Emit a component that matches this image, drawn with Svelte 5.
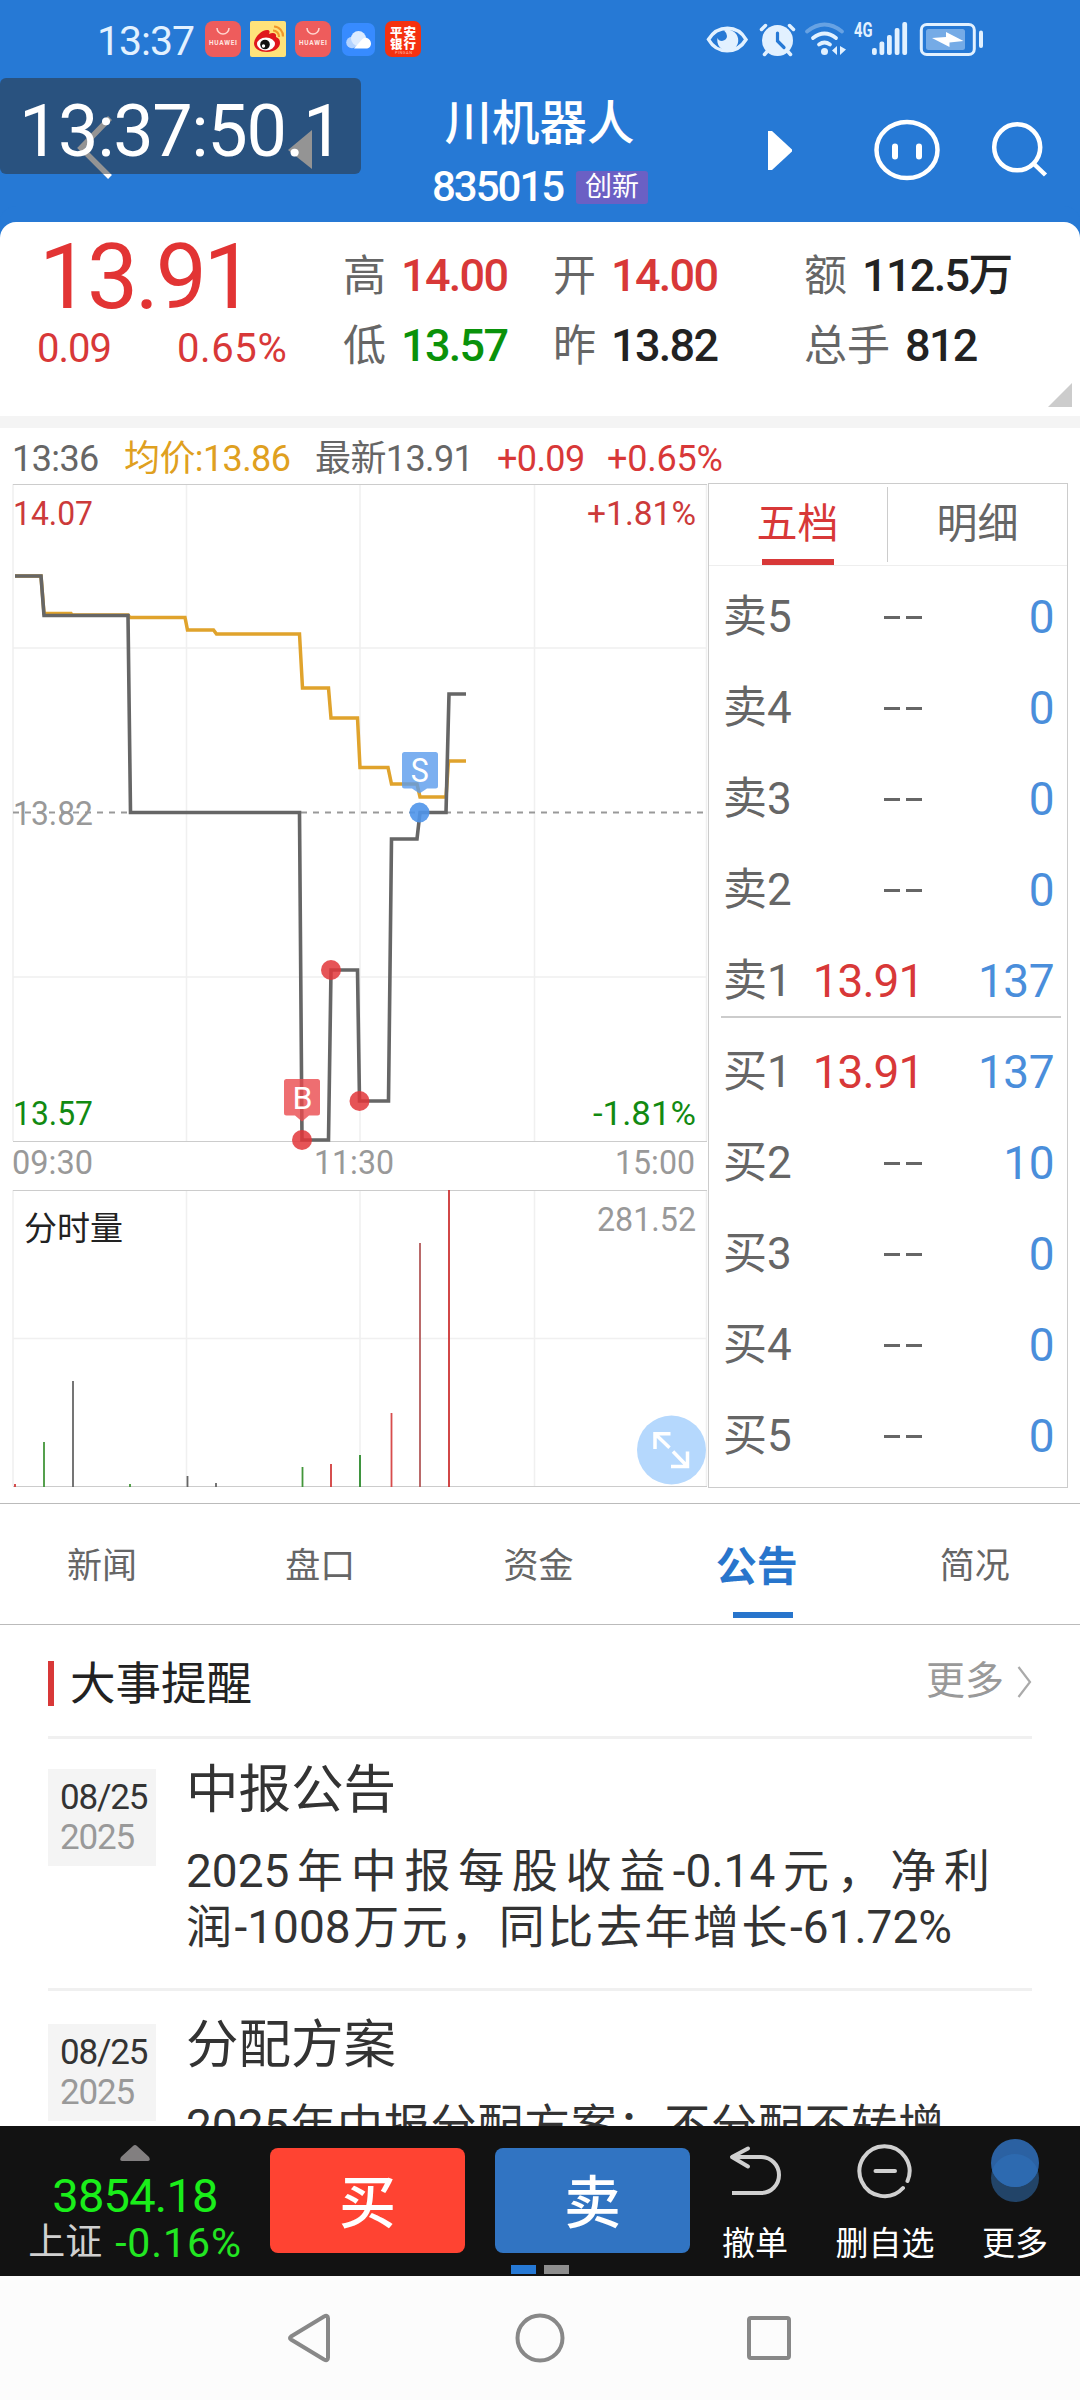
<script>
    let stats = [
        { label: "高", value: "14.00", tone: "red" },
        { label: "开", value: "14.00", tone: "red" },
        { label: "额", value: "112.5万", tone: "dark" },
        { label: "低", value: "13.57", tone: "green" },
        { label: "昨", value: "13.82", tone: "dark" },
        { label: "总手", value: "812", tone: "dark" },
    ];

    let sells = [
        { name: "卖5", price: "", count: 0 },
        { name: "卖4", price: "", count: 0 },
        { name: "卖3", price: "", count: 0 },
        { name: "卖2", price: "", count: 0 },
        { name: "卖1", price: "13.91", count: 137 },
    ];

    let buys = [
        { name: "买1", price: "13.91", count: 137 },
        { name: "买2", price: "", count: 10 },
        { name: "买3", price: "", count: 0 },
        { name: "买4", price: "", count: 0 },
        { name: "买5", price: "", count: 0 },
    ];

    let tabs = ["新闻", "盘口", "资金", "公告", "简况"];
    let activeTab = "公告";

    let events = [
        {
            day: "08/25",
            year: "2025",
            title: "中报公告",
            lines: [
                { text: "2025年中报每股收益-0.14元，净利", width: 804 },
                { text: "润-1008万元，同比去年增长-61.72%", width: 766 },
            ],
        },
        {
            day: "08/25",
            year: "2025",
            title: "分配方案",
            lines: [{ text: "2025年中报分配方案：不分配不转增", width: 758 }],
        },
    ];

    // minute chart
    let priceLine =
        "15,576 41,576 44,615.5 128,615.5 130.5,812.5 299.5,812.5 302,1140 328.5,1140 331,970 357.5,970 359.5,1101 388.5,1101 391.5,839 417,839 420,812.5 446,812.5 449,694 466,694";
    let avgLine =
        "15,576 41,576 44,613.5 71,613.5 72,615 128,615 130,617.5 185,617.5 187.5,630 213.5,630 216.5,634 299.5,634 302.5,688 328.5,688 331,718 357.5,718 360,767.5 388,767.5 391.5,784 417,784 420,797 446,797 448.5,761 466,761";

    let volumes = [
        { x: 15, top: 1484, color: "#d23c3c" },
        { x: 44, top: 1442, color: "#43963a" },
        { x: 73, top: 1381, color: "#666" },
        { x: 130, top: 1484, color: "#43963a" },
        { x: 187.5, top: 1476, color: "#666" },
        { x: 216, top: 1483, color: "#666" },
        { x: 302.5, top: 1467, color: "#43963a" },
        { x: 331, top: 1464, color: "#d23c3c" },
        { x: 360, top: 1455, color: "#2c8a2c" },
        { x: 391.5, top: 1413, color: "#d84c4c" },
        { x: 420, top: 1243, color: "#b35a5a" },
        { x: 449, top: 1190, color: "#cc3333" },
    ];

    let dots = [
        { x: 302, y: 1140 },
        { x: 331, y: 970 },
        { x: 359.5, y: 1101 },
    ];
</script>

{#snippet huawei()}
    <svg width="36" height="36" viewBox="0 0 36 36">
        <rect width="36" height="36" rx="8" fill="#ee5c5c" />
        <path d="M12 7a6 6 0 0 0 12 0" fill="none" stroke="#ffd5d0" stroke-width="1.5" />
        <text x="4" y="24" font-size="6.5" font-weight="700" fill="#ffe6e2" textLength="28">HUAWEI</text>
    </svg>
{/snippet}

{#snippet level(row)}
    <div class="level">
        <span>{row.name}</span>
        {#if row.price}
            <span class="level-price red">{row.price}</span>
        {:else}
            <span class="level-price none"><i></i><i></i></span>
        {/if}
        <span class="level-count">{row.count}</span>
    </div>
{/snippet}

<main>
    <header>
        <div class="status">
            <span class="status-time">13:37</span>
            <div class="apps">
                {@render huawei()}
                <svg width="36" height="36" viewBox="0 0 36 36">
                    <rect width="36" height="36" rx="2" fill="#ffe27a" />
                    <path d="M4 22C5 15 12 9 17 9c3 0 3 2 2 4 4-2 8-1 7 3 3 1 4 3 4 6 0 5-6 9-13 9S4 28 4 22z" fill="#e0161c" />
                    <ellipse cx="16" cy="23" rx="9" ry="6.5" fill="#fff" />
                    <circle cx="15" cy="23.500" r="4.800" fill="#111" />
                    <circle cx="13.500" cy="25" r="1.700" fill="#fff" />
                    <path d="M23 9.500a6 6 0 0 1 6 6.500M24 5.500a9.500 9.500 0 0 1 9 10" fill="none" stroke="#f0962a" stroke-width="2.200" />
                </svg>
                {@render huawei()}
                <svg class="cloud" width="33" height="33" viewBox="0 0 33 33">
                    <rect width="33" height="33" rx="7" fill="#378bff" />
                    <circle cx="10" cy="19.500" r="5.800" fill="#b3d3ff" />
                    <circle cx="16.500" cy="15.500" r="7.500" fill="#dcebff" />
                    <path d="M12 25.500l8-9c3-4 9-1 9 4 0 3-2 5-5 5z" fill="#fff" />
                </svg>
                <svg width="36" height="36" viewBox="0 0 36 36">
                    <rect width="36" height="36" rx="7" fill="#f5310f" />
                    <text x="5" y="16" font-size="12.500" font-weight="900" fill="#fff" textLength="26">平安</text>
                    <text x="5" y="27.500" font-size="12.500" font-weight="900" fill="#fff" textLength="26">银行</text>
                    <text x="10" y="33" font-size="4" fill="#ffb9a8" textLength="17">PINGAN</text>
                </svg>
            </div>
            <svg class="status-icons" width="278" height="50" viewBox="706 10 278 50" fill="#e2f1ff">
                <path d="M708.500 39.500c9-15 29-15 37.500 0c-9 15-29 15-37.500 0z" fill="none" stroke="#e2f1ff" stroke-width="3.500" />
                <path d="M724 30.500a10.500 10.500 0 1 1-6.500 7.500q1 3 4.500 3q5-1 5-5q0-3-3-5.500z" />
                <circle cx="777.500" cy="40.500" r="15.500" />
                <path d="M777.500 33v8l6.500 6.500" fill="none" stroke="#2679d5" stroke-width="3.200" stroke-linecap="round" />
                <path d="M761.500 29.500l4-4M793.500 29.500l-4-4M764.500 54.500l3.500-4M790.500 54.500l-3.500-4" stroke="#e2f1ff" stroke-width="3.500" stroke-linecap="round" />
                <g fill="none" stroke="#e2f1ff" stroke-width="3.800" stroke-linecap="round">
                    <path d="M807 31.500q17.500-14 35 0" opacity="0.350" />
                    <path d="M813 38q11.500-9 23 0M819 44.500q5.500-4 11 0" />
                </g>
                <circle cx="824.500" cy="51.500" r="3.500" />
                <path d="M837 46v9l-5-4.500zM840 46v9l6-5.500z" />
                <text x="854" y="37" font-size="20" font-weight="700" textLength="18.500" lengthAdjust="spacingAndGlyphs">4G</text>
                <rect x="872" y="48" width="4.800" height="7" rx="2" />
                <rect x="879.500" y="41.500" width="4.800" height="13.500" rx="2" />
                <rect x="887" y="35" width="4.800" height="20" rx="2" />
                <rect x="894.700" y="28" width="4.800" height="27" rx="2" />
                <rect x="902.300" y="22" width="4.800" height="33" rx="2" />
                <rect x="921.300" y="24.500" width="53" height="30" rx="5.500" fill="none" stroke="#e2f1ff" stroke-width="3" />
                <rect x="926" y="29" width="39" height="21" rx="2.500" opacity="0.420" />
                <path d="M932 38l14-1v-5l17.500 9l-14 1.500v4.500z" fill="#fff" />
                <rect x="979" y="30.500" width="4" height="17.500" rx="2" />
            </svg>
        </div>

        <div class="titlebar">
            <svg class="back" width="240" height="70" viewBox="76 112 240 70">
                <path d="M110 118L81 148l29 29" fill="none" stroke="#fff" stroke-width="5.500" />
                <path d="M288 150l24-20v39z" fill="#fff" />
            </svg>
            <div class="name">
                <h1>川机器人</h1>
                <div class="code"><span>835015</span><em>创新</em></div>
            </div>
            <svg class="actions" width="284" height="70" viewBox="766 115 284 70" fill="none" stroke="#fff">
                <path d="M768 131v39h4l20-18.500v-2L772 131z" fill="#fff" stroke="none" />
                <ellipse cx="907" cy="150" rx="30.500" ry="28" stroke-width="4.500" />
                <path d="M895 146.500v10M919 146.500v10" stroke-width="6" stroke-linecap="round" />
                <circle cx="1017.200" cy="147.300" r="23" stroke-width="4.500" />
                <path d="M1033.500 163.500l12 11.500" stroke-width="4.500" />
            </svg>
        </div>
        <div class="clock">13:37:50.1</div>
    </header>

    <section class="quote">
        <div class="last red">
            <div class="last-price">13.91</div>
            <div class="change"><span>0.09</span><span>0.65%</span></div>
        </div>
        <div class="stats">
            {#each stats as s}
                <div class="stat">{s.label}<b class={s.tone}>{s.value}</b></div>
            {/each}
        </div>
        <i class="corner"></i>
    </section>

    <div class="info">
        <span class="i1">13:36</span>
        <span class="i2">均价:13.86</span>
        <span class="i3">最新13.91</span>
        <span class="i4 red">+0.09</span>
        <span class="i5 red">+0.65%</span>
    </div>

    <section class="market">
        <svg class="chart" width="708" height="1006" viewBox="0 483 708 1006" font-size="34">
            <g stroke="#f0f0f0" stroke-width="1.500">
                <path d="M13 484v657M186.500 484v657M360 484v657M534.500 484v657M706.500 484v657M13 648h694M13 977h694" />
                <path d="M13 1190v296M186.500 1190v296M360 1190v296M534.500 1190v296M706.500 1190v296M13 1338.500h694" />
            </g>
            <path d="M13 484.500h694M13 1141.500h694M13 1190.500h694M13 1486.500h694" stroke="#ccc" />
            <g class="light">
                <text x="13" y="825" textLength="80" lengthAdjust="spacingAndGlyphs">13.82</text>
                <text x="12" y="1174" textLength="81" lengthAdjust="spacingAndGlyphs">09:30</text>
                <text x="314" y="1174" textLength="80" lengthAdjust="spacingAndGlyphs">11:30</text>
                <text x="615" y="1174" textLength="80" lengthAdjust="spacingAndGlyphs">15:00</text>
                <text x="597" y="1231" textLength="99" lengthAdjust="spacingAndGlyphs">281.52</text>
            </g>
            <path d="M13 812.500h690" stroke="#999" stroke-width="1.800" stroke-dasharray="6 6" />
            <polyline points={avgLine} fill="none" stroke="#e0a32c" stroke-width="3.500" />
            <polyline points={priceLine} fill="none" stroke="#666" stroke-width="3.600" />

            <g class="up">
                <text x="13" y="525" textLength="80" lengthAdjust="spacingAndGlyphs">14.07</text>
                <text x="587" y="525" textLength="109" lengthAdjust="spacingAndGlyphs">+1.81%</text>
            </g>
            <g class="down">
                <text x="13" y="1125" textLength="80" lengthAdjust="spacingAndGlyphs">13.57</text>
                <text x="593" y="1125" textLength="103" lengthAdjust="spacingAndGlyphs">-1.81%</text>
            </g>

            {#each dots as d}
                <circle cx={d.x} cy={d.y} r="10" fill="#e2363a" opacity="0.850" />
            {/each}
            <circle cx="419.500" cy="812.500" r="10" fill="#4f95ea" opacity="0.900" />
            <path d="M404.500 752h31q2.500 0 2.500 2.500v31.500q0 2.500-2.500 2.500h-8.500l-7.500 5l-7.500-5h-7.500q-2.500 0-2.500-2.500v-31.500q0-2.500 2.500-2.500z" fill="#5a9bec" opacity="0.800" />
            <text x="419.800" y="781.500" font-size="33" fill="#fff" text-anchor="middle" textLength="18" lengthAdjust="spacingAndGlyphs">S</text>
            <path d="M286.500 1079h31q2.500 0 2.500 2.500v31.500q0 2.500-2.500 2.500h-8.500l-7 6l-7-6h-8.500q-2.500 0-2.500-2.500v-31.500q0-2.500 2.500-2.500z" fill="#ea4a4e" opacity="0.800" />
            <text x="302.500" y="1109" font-size="32" fill="#fff" text-anchor="middle" textLength="20" lengthAdjust="spacingAndGlyphs">B</text>

            {#each volumes as v}
                <rect x={v.x - 0.9} y={v.top} width="1.800" height={1487 - v.top} fill={v.color} />
            {/each}
            <text x="24" y="1240" font-size="33" fill="#222">分时量</text>

            <circle cx="671.500" cy="1450" r="34.500" fill="#b5d8fd" />
            <path d="M670.500 1433.800H655V1449M655 1433.800l14.500 14M687.500 1451.500V1466.500H671M687.500 1466.500l-14.500-15" fill="none" stroke="#fff" stroke-width="3.500" />
        </svg>

        <div class="book">
            <div class="book-tabs">
                <span class="on">五档</span>
                <span>明细</span>
            </div>
            {#each sells as row}
                {@render level(row)}
            {/each}
            <hr />
            {#each buys as row}
                {@render level(row)}
            {/each}
        </div>
    </section>

    <nav class="tabs">
        {#each tabs as tab}
            <span class:active={tab === activeTab}>{tab}</span>
        {/each}
    </nav>

    <section class="events">
        <div class="events-head">
            <h2>大事提醒</h2>
            <span class="more">更多
                <svg width="15" height="32" viewBox="0 0 15 32"><path d="M1.500 1l11.500 15L1.500 31" fill="none" stroke="#aaa" stroke-width="2.200" /></svg>
            </span>
        </div>
        {#each events as e}
            <article>
                <div class="date"><span>{e.day}</span><span class="year">{e.year}</span></div>
                <div class="body">
                    <h3>{e.title}</h3>
                    {#each e.lines as line}
                        <p style="width: {line.width}px">{line.text}</p>
                    {/each}
                </div>
            </article>
        {/each}
    </section>

    <footer>
        <div class="index">
            <svg width="30" height="17" viewBox="0 0 30 17"><path d="M13 1q2-2 4 0l12 11q2 4-1 4H2q-3 0-1-4z" fill="#827f80" /></svg>
            <strong>3854.18</strong>
            <div><span>上证</span><b>-0.16%</b></div>
        </div>
        <div class="trade">
            <button class="buy">买</button>
            <button class="sell">卖</button>
            <div class="pager"><i></i><i></i></div>
        </div>
        <div class="tool">
            <svg width="52" height="68" viewBox="730 2136 52 68" fill="none" stroke="#d0d0d0" stroke-width="4">
                <path d="M733 2157h29a18 18 0 0 1 0 36h-29" />
                <path d="M749 2148.500l-16 8.500l16 9.500" stroke-linecap="round" stroke-linejoin="round" />
            </svg>
            <span>撤单</span>
        </div>
        <div class="tool">
            <svg width="56" height="68" viewBox="857 2136 56 68" fill="none" stroke="#d0d0d0" stroke-width="4" stroke-linecap="round">
                <path d="M903 2188a25 25 0 1 1 4.500-7M875.500 2171h19.500" />
            </svg>
            <span>删自选</span>
        </div>
        <div class="tool">
            <svg width="50" height="68" viewBox="989 2136 50 68">
                <circle cx="1014" cy="2178" r="24" fill="#224468" />
                <circle cx="1014" cy="2163" r="24" fill="#2b61a2" />
                <path d="M991.200 2170.500a24 24 0 0 0 45.600 0a24 24 0 0 0-45.600 0z" fill="#2d6ab0" />
            </svg>
            <span>更多</span>
        </div>
    </footer>

    <div class="sysnav">
        <svg width="46" height="52" viewBox="0 0 46 52"><path d="M4 24.500L37 4.500q4-2 4 2v39q0 4-4 2L4 27.500q-2-1.500 0-3z" /></svg>
        <svg width="52" height="52" viewBox="0 0 52 52"><circle cx="26" cy="26" r="22.500" /></svg>
        <svg width="46" height="52" viewBox="3 0 46 52"><rect x="6" y="6" width="40" height="40" rx="2" /></svg>
    </div>
</main>

<style>
    :global(body) {
        background: #fff;
    }

    main {
        width: 1080px;
        height: 2400px;
        overflow: hidden;
        display: flex;
        flex-direction: column;
        background: #fff;
        color: #666;
        font-family: Roboto, "Noto Sans CJK SC", sans-serif;
        white-space: nowrap;
    }

    main * {
        box-sizing: border-box;
        flex-shrink: 0;
    }

    svg {
        display: block;
    }

    h1,
    h2,
    h3,
    p {
        margin: 0;
        font-weight: 400;
    }

    i,
    em {
        font-style: normal;
    }

    .red {
        color: #d83838;
    }

    .green {
        color: #0a920a;
    }

    .dark {
        color: #222;
    }

    header {
        position: relative;
        height: 222px;
        background: #2679d5;
    }

    .status {
        height: 78px;
        display: flex;
        padding-top: 20px;
    }

    .status-time {
        width: 107px;
        margin-left: 97px;
        font-size: 41px;
        line-height: 42px;
        letter-spacing: -1px;
        color: #e2f1ff;
    }

    .apps {
        display: flex;
        gap: 9px;
        padding-top: 1px;
        margin-left: 1px;
        width: 501px;
    }

    .cloud {
        margin: 2px 1px 0 2px;
    }

    .status-icons {
        margin-top: -10px;
    }

    .titlebar {
        display: flex;
        height: 144px;
    }

    .back {
        margin: 34px 0 0 76px;
    }

    .name {
        width: 216px;
        margin-left: 116px;
        display: flex;
        flex-direction: column;
        align-items: center;
    }

    h1 {
        margin-top: 15px;
        margin-left: -2px;
        width: 189px;
        height: 62px;
        font-size: 47.500px;
        line-height: 62px;
        font-weight: 500;
        color: #fff;
    }

    .code {
        display: flex;
        align-items: center;
        width: 216px;
        margin-top: 11px;
        height: 42px;
        font-size: 42px;
        line-height: 42px;
        color: #fff;
    }

    .code span {
        width: 144px;
        font-weight: 500;
        letter-spacing: -2px;
    }

    .code em {
        width: 72px;
        height: 33px;
        border-radius: 3px;
        background: #6b60c4;
        font-size: 27px;
        line-height: 33px;
        text-align: center;
    }

    .actions {
        margin: 37px 0 0 118px;
    }

    .clock {
        position: absolute;
        left: 0;
        top: 78px;
        width: 361px;
        height: 96px;
        padding-left: 19px;
        border-radius: 6px;
        background: rgba(46, 46, 46, 0.51);
        color: #fff;
        font-size: 72px;
        line-height: 107px;
        letter-spacing: -1.4px;
    }

    .quote {
        position: relative;
        height: 206px;
        display: flex;
        background: #fff;
        border-bottom: 12px solid #f4f4f4;
        border-radius: 16px 16px 0 0;
        box-shadow: 0 -16px 0 0 #2679d5;
    }

    .last {
        width: 344px;
        padding: 5px 0 0 37px;
    }

    .last-price {
        height: 98px;
        padding-left: 2px;
        font-size: 91px;
        line-height: 101px;
        letter-spacing: -3.2px;
        color: #e23434;
    }

    .change {
        display: flex;
        margin-top: 2px;
        font-size: 40px;
        line-height: 44px;
    }

    .change span:first-child {
        width: 140px;
        letter-spacing: -1px;
    }

    .change span:last-child {
        letter-spacing: 0.6px;
    }

    .stats {
        display: grid;
        grid-template-columns: 210px 251px 260px;
        grid-template-rows: 70px 70px;
        padding-top: 19px;
        margin-left: -1px;
    }

    .stat {
        font-size: 43px;
        line-height: 70px;
    }

    .stat b {
        margin-left: 15px;
        font-size: 45px;
        font-weight: 500;
        letter-spacing: -1.7px;
    }

    .corner {
        position: absolute;
        right: 8px;
        bottom: 9px;
        border-left: 24px solid transparent;
        border-bottom: 24px solid #ccc;
    }

    .info {
        display: flex;
        height: 55px;
        padding-left: 12px;
        font-size: 36px;
        line-height: 62px;
        letter-spacing: -0.6px;
    }

    .i1 {
        width: 112px;
    }

    .i2 {
        width: 191px;
        color: #dfa020;
    }

    .i3 {
        width: 182px;
    }

    .i4 {
        width: 110px;
    }

    .i5 {
        letter-spacing: -0.2px;
    }

    .market {
        height: 1020px;
        display: flex;
    }

    .light {
        fill: #999;
    }

    .up {
        fill: #cc3a3a;
    }

    .down {
        fill: #128a12;
    }

    .book {
        width: 360px;
        height: 1005px;
        border: 1px solid #ccc;
    }

    .book-tabs {
        display: flex;
        height: 82px;
        border-bottom: 1px solid #eee;
        font-size: 41px;
        line-height: 80px;
    }

    .book-tabs span {
        position: relative;
        width: 50%;
        text-align: center;
    }

    .book-tabs .on {
        color: #d83838;
        padding-right: 2px;
    }

    .book-tabs .on::before {
        content: "";
        position: absolute;
        right: 0;
        top: 3px;
        height: 75px;
        border-right: 1px solid #ccc;
    }

    .book-tabs .on::after {
        content: "";
        position: absolute;
        left: 53px;
        bottom: 0;
        width: 72px;
        height: 6px;
        background: #d83838;
    }

    .level {
        display: grid;
        grid-template-columns: 80px 130px 121px;
        height: 91px;
        padding-left: 14px;
        font-size: 44px;
        line-height: 102px;
        color: #666;
    }

    .level-price {
        text-align: center;
        font-size: 46px;
        letter-spacing: -1px;
    }

    .level-price.red {
        color: #d83838;
    }

    .none {
        display: flex;
        gap: 6px;
        padding: 50px 0 0 81px;
    }

    .none i {
        width: 16px;
        height: 3px;
        background: #666;
    }

    .level-count {
        text-align: right;
        font-size: 46px;
        letter-spacing: -0.5px;
        color: #4a8edb;
    }

    hr {
        height: 2px;
        margin: -5px 6px 3px 12px;
        border: 0;
        background: #ccc;
    }

    .tabs {
        display: flex;
        height: 122px;
        border-top: 1px solid #bbb;
        border-bottom: 1px solid #bbb;
        margin: 0 -5px 0 -7px;
    }

    .tabs span {
        position: relative;
        width: 218.200px;
        text-align: center;
        font-size: 35px;
        line-height: 126px;
    }

    .tabs .active {
        font-size: 41px;
        font-weight: 700;
        color: #2875cc;
    }

    .tabs .active::after {
        content: "";
        position: absolute;
        left: 85px;
        bottom: 6px;
        width: 60px;
        height: 6px;
        background: #2875cc;
    }

    .events {
        height: 501px;
        overflow: hidden;
        padding: 0 48px;
    }

    .events-head {
        display: flex;
        justify-content: space-between;
        align-items: flex-start;
        height: 111px;
        padding-top: 36px;
    }

    h2 {
        height: 45px;
        padding-left: 16px;
        border-left: 6px solid #d83838;
        font-size: 45.500px;
        line-height: 47px;
        color: #222;
    }

    .more {
        display: flex;
        align-items: center;
        gap: 13px;
        font-size: 39px;
        line-height: 41px;
        color: #999;
    }

    article {
        display: flex;
        height: 252px;
        border-top: 3px solid #f0f0f0;
    }

    .date {
        width: 108px;
        height: 97px;
        margin-top: 30px;
        padding: 9px 0 0 12px;
        background: #f4f4f4;
        font-size: 35px;
        line-height: 40px;
        color: #333;
        display: flex;
        flex-direction: column;
        letter-spacing: -1.200px;
    }

    .year {
        color: #999;
    }

    .body {
        margin-left: 30px;
        color: #333;
    }

    h3 {
        height: 104px;
        font-size: 52.500px;
        line-height: 102px;
    }

    p {
        height: 56px;
        font-size: 46px;
        line-height: 56px;
        text-align: justify;
        text-align-last: justify;
    }

    article + article .date {
        margin-top: 33px;
    }

    article + article .body {
        padding-top: 3px;
    }

    footer {
        display: flex;
        height: 150px;
        background: #121212;
        color: #fff;
    }

    .index {
        width: 270px;
        padding-top: 19px;
        display: flex;
        flex-direction: column;
        align-items: center;
    }

    .index strong {
        margin-top: 8px;
        font-size: 47px;
        line-height: 52px;
        font-weight: 400;
        letter-spacing: -0.8px;
        color: #1aee1a;
    }

    .index div {
        display: flex;
        gap: 13px;
        font-size: 37px;
        line-height: 42px;
        color: #d0d0d0;
    }

    .index b {
        font-size: 41px;
        font-weight: 400;
        letter-spacing: 0.9px;
        color: #22e622;
    }

    .trade {
        display: grid;
        grid-template-columns: 195px 195px;
        column-gap: 30px;
        grid-template-rows: 105px 9px;
        row-gap: 12px;
        padding-top: 22px;
    }

    button {
        padding: 3px 0 0;
        border: 0;
        border-radius: 8px;
        font: 500 57px/105px Roboto, "Noto Sans CJK SC", sans-serif;
        color: #fff;
    }

    .buy {
        background: #ff4332;
    }

    .sell {
        background: #3174c2;
    }

    .pager {
        grid-column: 1 / 3;
        display: flex;
        gap: 8px;
        padding-left: 241px;
    }

    .pager i {
        width: 25px;
        background: #8e8e8e;
    }

    .pager i:first-child {
        background: #2679d5;
    }

    .tool {
        width: 130px;
        display: flex;
        flex-direction: column;
        align-items: center;
        padding-top: 10px;
        font-size: 33px;
        line-height: 40px;
    }

    .tool span {
        margin-top: 20px;
    }

    .sysnav {
        height: 124px;
        display: flex;
        align-items: center;
        justify-content: space-between;
        padding: 0 288px 0 287px;
        background: #fcfcfc;
    }

    .sysnav svg {
        fill: none;
        stroke: #888;
        stroke-width: 4;
    }
</style>
